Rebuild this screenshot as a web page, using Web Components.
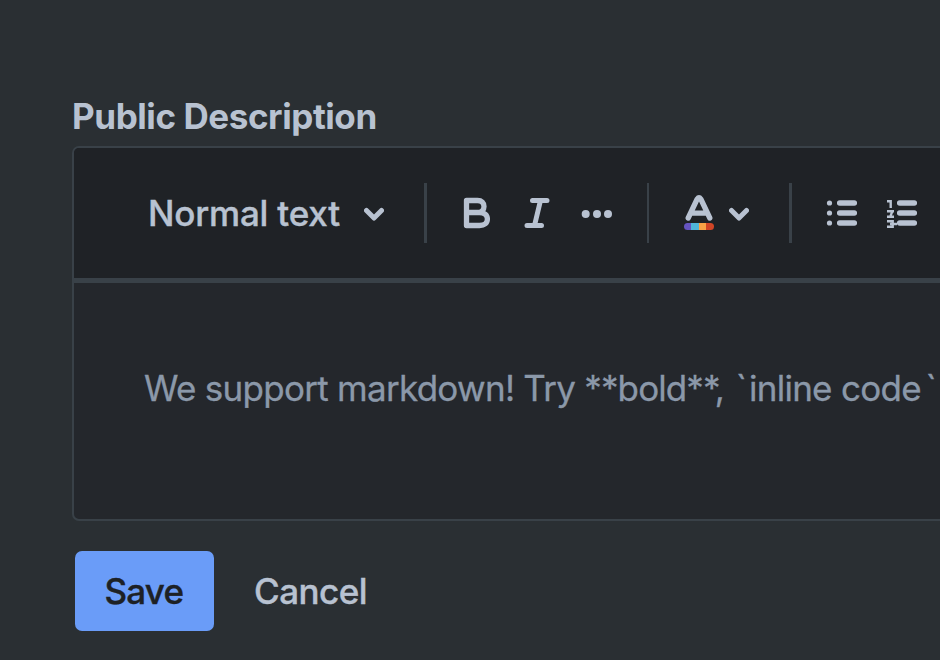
<!DOCTYPE html>
<html lang="en">
<head>
<meta charset="utf-8">
<title>Public Description</title>
<style>
html,body{margin:0;height:100%;overflow:hidden;background:#2a2f33}
body{font-family:Inter,"Liberation Sans",sans-serif;color:#b8c2d1}
</style>
</head>
<body>
<description-field>
  <field-label slot="label">Public Description</field-label>
  <text-editor slot="editor">
    <editor-toolbar slot="toolbar">
      <text-style>Normal text</text-style>
      <tool-separator style="--w:3px;margin-left:40px"></tool-separator>
      <tool-icon name="bold" style="margin-left:33px"></tool-icon>
      <tool-icon name="italic" style="margin-left:23.5px"></tool-icon>
      <tool-icon name="more" style="margin-left:17.5px"></tool-icon>
      <tool-separator style="--w:2px;margin-left:30px"></tool-separator>
      <tool-icon name="color" style="margin-left:30px"></tool-icon>
      <tool-icon name="chevron" style="margin-left:10px"></tool-icon>
      <tool-separator style="--w:3px;margin-left:40px"></tool-separator>
      <tool-icon name="bullets" style="margin-left:30px"></tool-icon>
      <tool-icon name="numbers" style="margin-left:20px"></tool-icon>
    </editor-toolbar>
    <editor-placeholder>We support markdown! Try <span style="letter-spacing:-.9px">**bold**,</span> <span style="margin-left:2.5px;letter-spacing:2px">`</span>inline code<span style="margin-left:4.5px">`</span></editor-placeholder>
  </text-editor>
  <action-button slot="actions" variant="primary">Save</action-button>
  <action-button slot="actions">Cancel</action-button>
</description-field>
<script>
const define = (name, html, setup) => customElements.define(name, class extends HTMLElement {
  constructor() {
    super();
    this.attachShadow({mode: "open"}).innerHTML = html;
  }
  connectedCallback() { if (setup) setup(this); }
});

define("description-field", `<style>
:host{display:block;box-sizing:border-box;width:940px;height:660px;padding:95px 0 0 72px;overflow:hidden}
.actions{display:flex;padding:30px 0 0 3px}
</style><slot name="label"></slot><slot name="editor"></slot><div class="actions"><slot name="actions"></slot></div>`);

define("field-label", `<style>
:host{display:block;height:51px;line-height:42px;font-size:35px;font-weight:650;letter-spacing:-.42px;white-space:nowrap}
</style><slot></slot>`);

define("text-editor", `<style>
:host{display:block;box-sizing:border-box;width:900px;height:375px;border:2px solid #394148;border-radius:7px;background:#24272c;overflow:hidden}
</style><slot name="toolbar"></slot><slot></slot>`);

define("editor-toolbar", `<style>
:host{display:flex;align-items:center;height:130px;padding-left:74px;background:#1f2226;border-bottom:5px solid #394148}
</style><slot></slot>`);

define("text-style", `<style>
:host{display:flex;align-items:center;width:236px;flex:none;justify-content:space-between;font-size:35px;font-weight:500;line-height:42px;white-space:nowrap}
span{letter-spacing:-.2px;-webkit-text-stroke:.4px currentColor}
</style><span><slot></slot></span><tool-icon name="chevron"></tool-icon>`);

define("tool-separator", `<style>
:host{display:block;flex:none;width:var(--w);height:60px;background:#394148}
</style>`);

/* Each icon: width of its box and its drawing, 60 units tall. */
const icons = {
  chevron: [20, `<path d="M2.500 27.500 10 35l7.500-7.500" fill="none" stroke="currentColor" stroke-width="5" stroke-linecap="round" stroke-linejoin="round"/>`],
  bold: [40, `<path d="M6.500 17.500H17.500C21.800 17.500 24 20 24 23.500 24 27 21.800 29.500 17.500 29.500H6.500ZM6.500 29.500H19.500C24.500 29.500 27.400 32 27.400 36 27.400 40 24.500 42.500 19.500 42.500H6.500Z" fill="none" stroke="currentColor" stroke-width="5.300" stroke-linejoin="round"/>`],
  italic: [40, `<path d="M8.500 17.500H23M3 42.500H17.500M16.500 17.500 10.500 42.500" fill="none" stroke="currentColor" stroke-width="5" stroke-linecap="round"/>`],
  more: [36, `<g fill="currentColor"><circle cx="4.700" cy="31" r="4"/><circle cx="16" cy="31" r="4"/><circle cx="27" cy="31" r="4"/></g>`],
  color: [40, `<path d="M9.200 35 18.200 16Q20 13.500 21.800 16L30.800 35M13.500 30.200H26.500" fill="none" stroke="currentColor" stroke-width="5.300" stroke-linecap="round" stroke-linejoin="round"/><path d="M12 40H8.500a3.500 3.500 0 0 0 0 7H12Z" fill="#6554c0"/><path d="M12 40h8v7h-8Z" fill="#4fb5da"/><path d="M20 40h7v7h-7Z" fill="#f9a245"/><path d="M27 40h4.500a3.500 3.500 0 0 1 0 7H27Z" fill="#d04526"/>`],
  bullets: [40, `<g fill="currentColor"><circle cx="7.500" cy="20" r="2.600"/><circle cx="7.500" cy="30" r="2.600"/><circle cx="7.500" cy="40" r="2.600"/></g><path d="M17.700 20H32.300M17.700 30H32.300M17.700 40H32.300" stroke="currentColor" stroke-width="5.500" stroke-linecap="round"/>`],
  numbers: [40, `<path d="M17.700 20H32.300M17.700 30H32.300M17.700 40H32.300" stroke="currentColor" stroke-width="5.500" stroke-linecap="round"/><path d="M5 18.300H8.700V25M5 28.300H12M5 33.700H12M10.300 28.300 8.300 33.700M5 38.300H10.700V43.700H5M8 41H15" fill="none" stroke="currentColor" stroke-width="2.400"/>`]
};
define("tool-icon", `<style>
:host{display:block;flex:none;height:60px}
svg{display:block;height:60px}
</style>`, el => {
  if (el.shadowRoot.querySelector("svg")) return;
  const [w, art] = icons[el.getAttribute("name")];
  el.shadowRoot.innerHTML += `<svg width="${w}" height="60" viewBox="0 0 ${w} 60" aria-hidden="true">${art}</svg>`;
});

define("editor-placeholder", `<style>
:host{display:block;padding:84px 0 0 70px;font-size:35px;line-height:42px;color:#8b98a9;white-space:nowrap;letter-spacing:-.72px;-webkit-text-stroke:.3px currentColor}
</style><slot></slot>`);

define("action-button", `<style>
:host{display:block;box-sizing:border-box;height:80px;padding:0 0 0 40px;font-size:35px;font-weight:500;line-height:81px;letter-spacing:-.5px;white-space:nowrap;-webkit-text-stroke:.4px currentColor}
:host([variant=primary]){width:139px;padding:0 0 0 29.500px;border-radius:7px;background:#6a9cf8;color:#1d2125;letter-spacing:-.8px}
</style><slot></slot>`);
</script>
</body>
</html>
